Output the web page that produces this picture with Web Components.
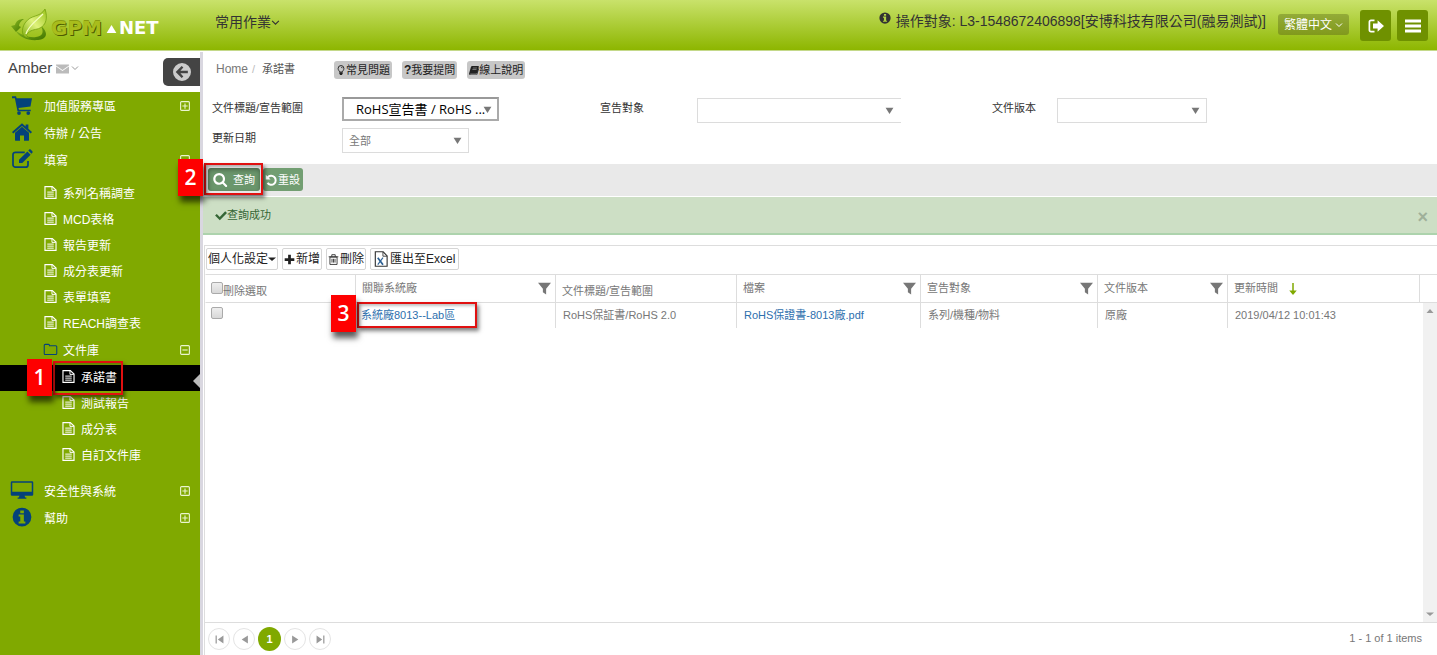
<!DOCTYPE html>
<html lang="zh-Hant">
<head>
<meta charset="utf-8">
<meta name="viewport" content="width=device-width, initial-scale=1">
<title>GPM.NET - 承諾書</title>
<style>
  html, body { margin: 0; height: 100%; }
  body {
    font: 11px/16px "Liberation Sans", "Noto Sans CJK TC", sans-serif;
    color: #333; background: #fff;
  }
</style>
</head>
<body>
<gpm-app></gpm-app>
<script>
const define = (name, html, setup) => {
  const tpl = document.createElement('template');
  tpl.innerHTML = html;
  customElements.define(name, class extends HTMLElement {
    connectedCallback() {
      if (this.shadowRoot) return;
      const root = this.attachShadow({ mode: 'open' });
      root.append(tpl.content.cloneNode(true));
      if (setup) setup(this, root);
    }
  });
};

/* ---------- icons, drawn on a 16 unit square ---------- */
const S = 'fill="none" stroke="currentColor"';
const ICONS = {
  cart: '<path d="M0 1h3.2l.5 1.6H16l-1.2 6.6-9.6 1.2.4 1.3H15V13H4.4L2.3 2.6H0z"/><circle cx="5.6" cy="14.4" r="1.5"/><circle cx="13" cy="14.4" r="1.5"/>',
  home: '<path d="M8 3.800l5.600 4.800v5.700a.7.7 0 0 1-.7.7H9.600v-4.200H6.400V15H3.100a.7.7 0 0 1-.7-.7V8.600z"/><path d="M8 1l2.900 2.500V1.900h2.200v3.500L16 7.900l-1 1.200L8 3.100 1 9.100 0 7.900z"/>',
  edit: `<path d="M12.800 9.600v2.900a2 2 0 0 1-2 2H2.800a2 2 0 0 1-2-2V4.600a2 2 0 0 1 2-2h7.400" ${S} stroke-width="1.400"/><path d="M12.300 1.900l2.600 2.600-6.700 6.700H5.600V8.600zM13 1.200l.8-.8c.3-.3.8-.3 1.100 0L16.300 1.800c.3.3.3.8 0 1.100l-.7.8z"/>`,
  desktop: '<path d="M0 1h16a1 1 0 0 1 1 1v9.500a1 1 0 0 1-1 1H10l.6 1.500h.9v1H4.500v-1h.9L6 12.500H0a1 1 0 0 1-1-1V2a1 1 0 0 1 1-1zm.2 1.200V9.400h15.600V2.200z" fill-rule="evenodd"/>',
  info: '<path d="M8 0.500a7.500 7.500 0 1 1 0 15A7.500 7.500 0 0 1 8 .5zM6.600 2.800v2.200h2.900V2.800zM5.300 6v1.600h1.300v3.900H5.300v1.600h5.400v-1.600H9.500V6z" fill-rule="evenodd"/>',
  file: `<path d="M1.200 .7h9L14.800 5v10.300H1.200z" ${S} stroke-width="1.400"/><path d="M9.800 1v4.400H14.500M4 7.500h8M4 10h8M4 12.500h8" ${S} stroke-width="1.200"/>`,
  folder: `<path d="M.3 3c0-.8.500-1.300 1.300-1.300h3.900c.7 0 1.200.5 1.200 1.200v.5H14.500c.7 0 1.200.5 1.200 1.200v8.400c0 .7-.5 1.200-1.200 1.200H1.500c-.7 0-1.200-.5-1.200-1.200z" ${S} stroke-width="1.300"/>`,
  plus: `<rect x="1" y="1" width="14" height="14" rx="1.500" ${S} stroke-width="1.800"/><path d="M3.800 8h8.400M8 3.800v8.400" ${S} stroke-width="1.800"/>`,
  minus: `<rect x="1" y="1" width="14" height="14" rx="1.500" ${S} stroke-width="1.800"/><path d="M3.800 8h8.400" ${S} stroke-width="1.800"/>`,
  chevron: `<path d="M2 5l6 6 6-6" ${S} stroke-width="2"/>`,
  mail: '<path d="M0 3h16v1.200L8 9.800 0 4.200zM0 5.600l8 5.600 8-5.600V14H0z"/>',
  back: '<path d="M8 0a8 8 0 1 1 0 16A8 8 0 0 1 8 0zM2.400 8l5.300 5.400 1.500-1.500L6.600 9.200h6.600V6.800H6.600l2.600-2.700-1.500-1.500z" fill-rule="evenodd"/>',
  logout: `<path d="M6.500 2.300H3A1.600 1.600 0 0 0 1.400 4v8A1.600 1.600 0 0 0 3 13.700h3.500" ${S} stroke-width="1.700"/><path d="M5 5.400h4.600V2.200L16 8l-6.400 5.800v-3.200H5z"/>`,
  bars: '<path d="M0 1.500h16v3H0zM0 6.500h16v3H0zM0 11.500h16v3H0z"/>',
  bulb: `<path d="M5.800 11.200C5.700 9.500 3.400 8.600 3.400 5.500a4.600 4.600 0 0 1 9.200 0c0 3.100-2.300 4-2.400 5.700z" ${S} stroke-width="1.500"/><path d="M5.300 11.500h5.400v2.600L9.300 16H6.700l-1.400-1.900zM8 3.200c1.500 0 2.500.9 2.500 2h-.9C9.600 4.500 9 4.100 8 4.100z"/>`,
  book: '<path d="M5.200 1.500h9.300c1 0 1.500.8 1.200 1.800L13 12.700c-.3.8-.9 1.300-1.700 1.300H2.500c-.6 0-.8.300-.6.600.1.300.4.400.9.400h9.400l2.900-9.700.9.900-2.800 9.100c-.2.500-.7.700-1.300.7H2.300C.8 16-.2 14.500.2 13L3 3.500c.3-1 .9-2 2.200-2zM6.300 4.300l-.3 1h6.500l.3-1zm-.7 2.400l-.3 1h6.500l.3-1z" fill-rule="evenodd"/>',
  search: '<path transform="translate(-.3 0) scale(.00893)" d="M1216 832q0-185-131.5-316.5t-316.5-131.5-316.5 131.5-131.5 316.5 131.500 316.500 316.500 131.500 316.500-131.500 131.500-316.500zm512 832q0 52-38 90t-90 38q-54 0-90-38l-343-342q-179 124-399 124-143 0-273.500-55.500t-225-150-150-225-55.500-273.500 55.500-273.500 150-225 225-150 273.500-55.500 273.500 55.500 225 150 150 225 55.500 273.500q0 220-124 399l343 343q37 37 37 90z"/>',
  undo: `<path d="M3.500 4.700A6 6 0 1 1 3.300 11.800" ${S} stroke-width="2.600"/><path d="M1 1v6.400h6.400z"/>`,
  check: '<path d="M2.400 6.600l3.900 3.900L13.600 3 16 5.300 6.400 14.900.1 8.800z"/>',
  add: '<path d="M6 1h4v5h5v4h-5v5H6v-5H1V6h5z"/>',
  trash: `<path d="M2.800 4.500h10.400v10.700H2.800zM1 4h14M5.500 3.800V1h5v2.800M5.800 7v5.500M8 7v5.500M10.200 7v5.500" ${S} stroke-width="1.200"/>`,
  excel: `<path d="M1.500 -.3h9L15 4.500v11.800H1.500z" fill="#fff" stroke="#333" stroke-width="1.300"/><path d="M10.200 0v4.800H15" fill="none" stroke="#333"/><path d="M4.300 6.500l6 8" fill="none" stroke="#2b5f93" stroke-width="2"/><path d="M10.300 6.500l-6 8" fill="none" stroke="#2b5f93" stroke-width="1.200"/>`,
  filter: '<path d="M0 1h16L10 8.200V15.500L6 12.500V8.200z"/>',
  down: `<path d="M8 0v14" ${S} stroke-width="2"/><path d="M3 10L8 16 13 10z"/>`,
  caret: '<path d="M0 5h16L8 12z"/>',
  arrow: '<path d="M1 3h14L8 14z"/>',
  left: '<path d="M14 1v14L3 8z"/>',
  right: '<path d="M2 1v14l11-7z"/>',
  first: '<path d="M15 1v14L5 8zM1 1h2.200v14H1z"/>',
  last: '<path d="M1 1v14l10-7zM12.800 1H15v14h-2.200z"/>',
  up: '<path d="M1 12h14L8 4z"/>'
};
customElements.define('gpm-icon', class extends HTMLElement {
  connectedCallback() {
    if (this.shadowRoot) return;
    this.attachShadow({ mode: 'open' }).innerHTML = `
      <style>
        :host { display: inline-block; flex: none; width: var(--size, 12px); height: var(--size, 12px); }
        svg { display: block; width: 100%; height: 100%; overflow: visible; fill: currentColor; }
      </style>
      <svg viewBox="0 0 16 16" aria-hidden="true">${ICONS[this.getAttribute('name')] || ''}</svg>`;
  }
});

/* ---------- numbered step marker around a target ---------- */
define('step-mark', `
  <style>
    :host { display: inline-flex; position: relative; }
    .frame { position: absolute; inset: var(--frame, -4px); border: 2px solid #e01010; pointer-events: none;
      box-shadow: 2px 3px 4px rgba(0,0,0,.5), inset 1px 2px 3px rgba(0,0,0,.25); }
    .badge { position: absolute; right: 100%; bottom: var(--drop, -3px); margin-right: 3px; width: 25px; height: 37px;
      background: #fe0000; color: #fff; font: 600 21px/36px "Open Sans", sans-serif; text-align: center;
      box-shadow: 2px 6px 6px rgba(0,0,0,.65); }
  </style>
  <slot></slot><span class="frame"><span class="badge"></span></span>`,
  (el, root) => { root.querySelector('.badge').textContent = el.getAttribute('step'); });

/* ---------- logo ---------- */
define('gpm-logo', `
  <style>
    :host { display: block; }
    a { display: flex; align-items: center; text-decoration: none; font: bold 20px/24px "DejaVu Sans", sans-serif; }
    .leaf { width: 38px; height: 34px; margin-right: 2px; }
    span { padding-top: 3px; }
    .g { color: #a9bd1c; text-shadow: 1px 1px 0 #4d5c00, 0 -1px 0 #8a9c10; }
    .tri { width: 11px; height: 8px; margin: 6px 2px 0 4px; }
    .n { color: #fff; font-size: 18px; }
  </style>
  <a href="#">
    <svg class="leaf" viewBox="0 0 38 34" aria-hidden="true">
      <defs>
        <linearGradient id="a" x1="0" y1="1" x2="1" y2="0"><stop offset="0" stop-color="#7fae10"/><stop offset=".5" stop-color="#dff27c"/><stop offset="1" stop-color="#9cc41c"/></linearGradient>
        <linearGradient id="b" x1="0" y1="0" x2="1" y2="1"><stop offset="0" stop-color="#8fbd22"/><stop offset="1" stop-color="#3f7400"/></linearGradient>
      </defs>
      <path d="M13 10C8 10 5 12 4 16L0 17l5 6 5-5-2-1c0-3 2-5 5-7z" fill="url(#b)"/>
      <path d="M5 22c3 6 12 10 22 9 9-1 11-7 3-14 3 6 2 10-5 11-7 1-14-2-20-6z" fill="url(#b)"/>
      <path d="M34 0c3 9 1 16-5 19-4 2-8 1-12 5-2 2-2 3 1 5-8 0-8-9-4-15C20 5 29 9 34 0z" fill="url(#a)" stroke="#6f9c08" stroke-width=".7"/>
      <path d="M15 25C17 17 25 12 32 5" fill="none" stroke="#f6ffc4" stroke-width="1.200"/>
    </svg>
    <span class="g">GPM</span>
    <svg class="tri" viewBox="0 0 11 9" aria-hidden="true"><path d="M5.500 0L11 9H0z" fill="#fff"/></svg>
    <span class="n">NET</span>
  </a>`);

/* ---------- top bar ---------- */
define('gpm-topbar', `
  <style>
    :host { display: flex; align-items: flex-start; height: 50px; box-sizing: border-box;
      background: linear-gradient(#c9e26b, #8db600); box-shadow: 0 1px 0 #c4d98a; font-size: 14px; color: #333; }
    gpm-logo { margin: 9px 0 0 11px; width: 189px; }
    .menu { margin: 14px auto 0 15px; }
    button { border: 0; padding: 0; font: inherit; color: inherit; background: none; display: flex; align-items: center; }
    .menu gpm-icon { --size: 9px; }
    .target { display: flex; margin: 12px 12px 0 0; line-height: 18px; white-space: nowrap; }
    .target gpm-icon { margin-right: 5px; }
    .lang { margin-top: 14px; height: 21px; padding: 0 6px; gap: 3px; border-radius: 3px; color: #fff; font-size: 12px;
      background: linear-gradient(#93ab38, #81991c); }
    .lang gpm-icon { --size: 8px; }
    .sq { width: 31px; height: 31px; margin-top: 10px; border-radius: 3px; background: #6f9100; color: #fff; justify-content: center; }
    .out { margin-left: 11px; margin-right: 6px; }
    .list { margin-right: 9px; }
    .sq gpm-icon { --size: 16px; }
  </style>
  <gpm-logo></gpm-logo>
  <button class="menu">常用作業<gpm-icon name="chevron"></gpm-icon></button>
  <div class="target"><gpm-icon name="info"></gpm-icon><span>操作對象: L3-1548672406898[安博科技有限公司(融易測試)]</span></div>
  <button class="lang">繁體中文<gpm-icon name="chevron"></gpm-icon></button>
  <button class="sq out" aria-label="登出"><gpm-icon name="logout"></gpm-icon></button>
  <button class="sq list" aria-label="選單"><gpm-icon name="bars"></gpm-icon></button>`);

/* ---------- sidebar ---------- */
define('nav-item', `
  <style>
    :host { display: block; color: #fff; font-size: 12px; }
    a { display: flex; align-items: center; height: 27px; padding: 0 10px 0 12px; color: inherit; text-decoration: none; }
    .lead { --size: 20px; width: 20px; height: 20px; margin: 0 12px 4px 0; color: #04427a; }
    .toggle { --size: 10px; margin: 0 0 2px auto; color: #eaf5cf; }
    :host([level="2"]) a, :host([level="3"]) a { height: 26px; padding-left: 44px; }
    :host([level="3"]) a { padding-left: 62px; }
    :host([level="2"]) .lead, :host([level="3"]) .lead { --size: 13px; width: 13px; height: 13px; margin-right: 6px; color: #fff; }
    :host([icon="folder"]) .lead { color: #04427a; }
    :host([current]) { position: relative; background: #000; }
    :host([current])::after { content: ""; position: absolute; right: 0; top: 9px; border: 7px solid transparent; border-left: 0; border-right-color: #bbb; }
    step-mark { align-items: center; --frame: -9px -6px -8px -9px; }
  </style>
  <a href="#"></a>`,
  (el, root) => {
    const a = root.querySelector('a');
    const body = `<gpm-icon class="lead" name="${el.getAttribute('icon') || 'file'}"></gpm-icon><slot></slot>`;
    const t = el.getAttribute('toggle');
    a.innerHTML = (el.hasAttribute('step') ? `<step-mark step="${el.getAttribute('step')}">${body}</step-mark>` : body) +
      (t ? `<gpm-icon class="toggle" name="${t}"></gpm-icon>` : '');
  });

define('gpm-sidebar', `
  <style>
    :host { display: flex; flex-direction: column; }
    .user { display: flex; align-items: center; height: 40px; background: #fff; color: #444; font-size: 15px; box-sizing: border-box; padding: 0 0 8px 8px; }
    .user .m { --size: 13px; margin-left: 4px; color: #bbb; }
    .user .c { --size: 8px; margin-left: 2px; color: #999; }
    button { display: flex; align-items: center; justify-content: center; width: 37px; height: 28px; margin: 8px 0 0 auto;
      border: 0; padding: 0; border-radius: 5px 0 0 5px; background: #444; color: #ccc; --size: 18px; }
    nav { flex: 1; background: #80a900; padding-top: 1px; }
    .sub { padding: 7px 0 9px; }
    .folder, .leafs { padding-top: 1px; }
  </style>
  <div class="user">Amber<gpm-icon class="m" name="mail"></gpm-icon><gpm-icon class="c" name="chevron"></gpm-icon>
    <button aria-label="收合選單"><gpm-icon name="back"></gpm-icon></button></div>
  <nav>
    <nav-item icon="cart" toggle="plus">加值服務專區</nav-item>
    <nav-item icon="home">待辦 / 公告</nav-item>
    <nav-item icon="edit" toggle="minus">填寫</nav-item>
    <div class="sub">
      <nav-item level="2">系列名稱調查</nav-item>
      <nav-item level="2">MCD表格</nav-item>
      <nav-item level="2">報告更新</nav-item>
      <nav-item level="2">成分表更新</nav-item>
      <nav-item level="2">表單填寫</nav-item>
      <nav-item level="2">REACH調查表</nav-item>
      <div class="folder"><nav-item level="2" icon="folder" toggle="minus">文件庫</nav-item></div>
      <div class="leafs">
        <nav-item level="3" step="1" current>承諾書</nav-item>
        <nav-item level="3">測試報告</nav-item>
        <nav-item level="3">成分表</nav-item>
        <nav-item level="3">自訂文件庫</nav-item>
      </div>
    </div>
    <nav-item icon="desktop" toggle="plus">安全性與系統</nav-item>
    <nav-item icon="info" toggle="plus">幫助</nav-item>
  </nav>`);

/* ---------- breadcrumb row ---------- */
define('gpm-crumbs', `
  <style>
    :host { display: flex; align-items: center; height: 35px; padding-left: 13px; }
    nav { display: flex; width: 118px; color: #555; padding-bottom: 2px; }
    a { color: #777; text-decoration: none; font-size: 12px; }
    i { color: #bbb; font-style: normal; margin: 0 7px 0 4px; }
    button { display: flex; align-items: center; height: 18px; margin: 1px 10px 0 0; padding: 0 2px; border: 0; border-radius: 3px;
      background: #c7c7c7; color: #222; font: inherit; }
    gpm-icon { --size: 10px; }
    b { font-size: 12px; }
  </style>
  <nav aria-label="breadcrumb"><a href="#">Home</a><i>/</i><span>承諾書</span></nav>
  <button><gpm-icon name="bulb"></gpm-icon>常見問題</button>
  <button><b>?</b>我要提問</button>
  <button><gpm-icon name="book"></gpm-icon>線上說明</button>`);

/* ---------- drop-down with its label ---------- */
define('gpm-field', `
  <style>
    :host { display: flex; align-items: flex-start; }
    label { flex: none; width: var(--label, 130px); line-height: 20px; color: #333; }
    .box { position: relative; flex: 0 1 var(--field, 157px); height: 25px; }
    select { appearance: none; width: 100%; height: 100%; box-sizing: border-box; margin: 0; padding: 0 20px 0 6px;
      border: 1px solid #dcdcdc; border-radius: 0; background: #fff; color: #777; font: inherit; }
    .box gpm-icon { position: absolute; right: 7px; top: 8px; --size: 9px; color: #777; pointer-events: none; }
    :host([strong]) select { border: 2px solid #aaa; border-top-color: #999; padding-left: 12px; padding-right: 0; color: #000;
      font: 13px "Open Sans", "Noto Sans CJK TC", sans-serif; }
    :host([strong]) .box { height: 24px; }
    :host([strong]) label { line-height: 22px; }
    :host([open-end]) select { border-right: 0; }
  </style>
  <label for="s"></label>
  <div class="box"><select id="s"><option></option></select><gpm-icon name="arrow"></gpm-icon></div>`,
  (el, root) => {
    root.querySelector('label').textContent = el.getAttribute('label');
    root.querySelector('option').textContent = el.getAttribute('value') || '';
  });

define('gpm-filters', `
  <style>
    :host { display: block; }
    .fields { display: grid; grid-template-columns: 388fr 392fr 445fr; row-gap: 5px; padding: 10px 0 11px 9px; align-items: start; }
    .target { --label: 97px; --field: 204px; }
    .version { --label: 65px; --field: 150px; }
    .date { --field: 127px; }
    .fields > :nth-child(2), .fields > :nth-child(3) { padding-top: 1px; }
    .actions { display: flex; gap: 3px; height: 32px; box-sizing: border-box; padding: 4px 5px; background: #e9e9e9; }
    button { display: flex; align-items: center; height: 23px; padding: 0 3px 0 2px; border: 0; border-radius: 3px; background: #729e72; color: #fff; font: inherit; gap: 1px; }
    .go { width: 52px; padding: 0 5px; gap: 5px; background: #6a966c; box-shadow: inset 0 2px 4px rgba(0,0,0,.3); --size: 15px; }
    step-mark { --frame: -5px -3px -3px -4px; }
  </style>
  <div class="fields">
    <gpm-field strong label="文件標題/宣告範圍" value="RoHS宣告書 / RoHS ..."></gpm-field>
    <gpm-field class="target" open-end label="宣告對象"></gpm-field>
    <gpm-field class="version" label="文件版本"></gpm-field>
    <gpm-field class="date" label="更新日期" value="全部"></gpm-field>
  </div>
  <div class="actions">
    <step-mark step="2"><button class="go"><gpm-icon name="search"></gpm-icon>查詢</button></step-mark>
    <button><gpm-icon name="undo"></gpm-icon>重設</button>
  </div>`);

define('gpm-alert', `
  <style>
    :host { display: flex; align-items: center; height: 38px; box-sizing: border-box; margin: 1px 0 10px; padding: 0 9px 0 12px;
      background: #cddfc5; border-bottom: 2px solid #add3ad; color: #356635; }
    gpm-icon { --size: 12px; }
    button { margin: 4px 0 0 auto; border: 0; padding: 0; background: none; color: #9fb09a; font: bold 18px/20px "Liberation Sans", sans-serif; }
  </style>
  <gpm-icon name="check"></gpm-icon><slot></slot><button aria-label="關閉">×</button>`);

/* ---------- toolbar ---------- */
define('gpm-toolbar', `
  <style>
    :host { display: flex; gap: 4px; padding: 2px 1px 4px; border-top: 1px solid #ddd; }
    button { display: flex; align-items: center; height: 22px; padding: 0 1px; border: 1px solid #d5d5d5; border-radius: 2px; background: #fff;
      color: #222; font: inherit; font-size: 12px; box-sizing: border-box; gap: 1px; --size: 11px; }
    .x { padding: 0 3px; gap: 2px; --size: 14px; }
    .c { gap: 0; --size: 8px; }
  </style>
  <button class="c">個人化設定<gpm-icon name="caret"></gpm-icon></button>
  <button><gpm-icon name="add"></gpm-icon>新增</button>
  <button><gpm-icon name="trash"></gpm-icon>刪除</button>
  <button class="x"><gpm-icon name="excel"></gpm-icon>匯出至Excel</button>`);

/* ---------- data grid ---------- */
define('gpm-grid', `
  <style>
    :host { display: flex; flex-direction: column; position: relative; flex: 1; border-bottom: 1px solid #ddd; }
    table { width: 100%; border-collapse: separate; border-spacing: 0; table-layout: fixed; color: #777; }
    th { height: 27px; padding: 0 4px 0 6px; border: solid #ddd; border-width: 1px 0 1px 1px; font-weight: normal; text-align: left; }
    th:first-child, td:first-child, td:nth-child(2), td:last-child { border-left-color: transparent; }
    td { height: 23px; padding: 0 7px 2px; border-left: 1px solid #ddd; white-space: nowrap; }
    th:first-child, td:first-child, td:nth-child(2) { padding-left: 5px; }
    .h { display: flex; align-items: center; justify-content: space-between; }
    .h span { padding-bottom: 2px; }
    .h gpm-icon { --size: 13px; color: #777; }
    th.low { padding-top: 4px; height: 23px; }
    .sort { justify-content: flex-start; gap: 9px; }
    .sort gpm-icon { color: #80a900; --size: 12px; }
    input { appearance: none; width: 12px; height: 12px; margin: 0; border: 1px solid #aaa; border-radius: 2px; background: linear-gradient(#eee, #d8d8d8); vertical-align: 1px; box-sizing: border-box; }
    td input { display: block; margin-bottom: 4px; }
    a { color: #2d6fae; text-decoration: none; }
    step-mark { min-width: 110px; --frame: -5px -6px -5px -4px; --drop: -6px; }
    .bar { position: absolute; right: 0; top: 29px; bottom: 0; width: 14px; background: #f1f1f1; color: #999; --size: 8px;
      display: flex; flex-direction: column; align-items: center; justify-content: space-between; padding: 4px 0; box-sizing: border-box; }
  </style>
  <table>
    <colgroup><col style="width:150px"><col style="width:200px"><col style="width:181px"><col style="width:184px"><col style="width:177px"><col style="width:130px"><col style="width:192px"><col style="width:18px"></colgroup>
    <thead><tr>
      <th class="low"><input type="checkbox" id="all"><label for="all">刪除選取</label></th>
      <th><div class="h"><span>關聯系統廠</span><gpm-icon name="filter"></gpm-icon></div></th>
      <th class="low">文件標題/宣告範圍</th>
      <th><div class="h"><span>檔案</span><gpm-icon name="filter"></gpm-icon></div></th>
      <th><div class="h"><span>宣告對象</span><gpm-icon name="filter"></gpm-icon></div></th>
      <th><div class="h"><span>文件版本</span><gpm-icon name="filter"></gpm-icon></div></th>
      <th><div class="h sort"><span>更新時間</span><gpm-icon name="down"></gpm-icon></div></th>
      <th></th>
    </tr></thead>
    <tbody><tr>
      <td><input type="checkbox" aria-label="選取"></td>
      <td><step-mark step="3"><a href="#">系統廠8013--Lab區</a></step-mark></td>
      <td>RoHS保証書/RoHS 2.0</td>
      <td><a href="#">RoHS保證書-8013廠.pdf</a></td>
      <td>系列/機種/物料</td>
      <td>原廠</td>
      <td>2019/04/12 10:01:43</td>
      <td></td>
    </tr></tbody>
  </table>
  <div class="bar"><gpm-icon name="up"></gpm-icon><gpm-icon name="caret"></gpm-icon></div>`);

define('gpm-pager', `
  <style>
    :host { display: flex; align-items: center; height: 32px; padding: 0 15px 0 3px; color: #777; gap: 3px; }
    button { display: flex; align-items: center; justify-content: center; width: 22px; height: 22px; padding: 0; border: 1px solid #e4e4e4;
      border-radius: 50%; background: #fff; color: #999; --size: 9px; box-sizing: border-box; font: inherit; }
    .on { width: 23px; height: 24px; border: 0; background: #80a900; color: #fff; font-weight: bold; }
    span { margin-left: auto; padding-bottom: 2px; }
  </style>
  <button aria-label="第一頁"><gpm-icon name="first"></gpm-icon></button>
  <button aria-label="上一頁"><gpm-icon name="left"></gpm-icon></button>
  <button class="on">1</button>
  <button aria-label="下一頁"><gpm-icon name="right"></gpm-icon></button>
  <button aria-label="最後一頁"><gpm-icon name="last"></gpm-icon></button>
  <span>1 - 1 of 1 items</span>`);

/* ---------- page ---------- */
define('gpm-app', `
  <style>
    :host { display: flex; flex-direction: column; min-height: 100vh; }
    .body { display: flex; flex: 1; margin-top: 2px; }
    gpm-sidebar { flex: none; width: 200px; border-right: 3px solid #d9d7e0; }
    main { flex: 1; min-width: 0; display: flex; flex-direction: column; }
    .panel { flex: 1; display: flex; flex-direction: column; border-left: 1px solid #ddd; margin-left: 1px; }
  </style>
  <gpm-topbar></gpm-topbar>
  <div class="body">
    <gpm-sidebar></gpm-sidebar>
    <main>
      <gpm-crumbs></gpm-crumbs>
      <gpm-filters></gpm-filters>
      <gpm-alert>查詢成功</gpm-alert>
      <div class="panel">
        <gpm-toolbar></gpm-toolbar>
        <gpm-grid></gpm-grid>
        <gpm-pager></gpm-pager>
      </div>
    </main>
  </div>`);
</script>
</body>
</html>
